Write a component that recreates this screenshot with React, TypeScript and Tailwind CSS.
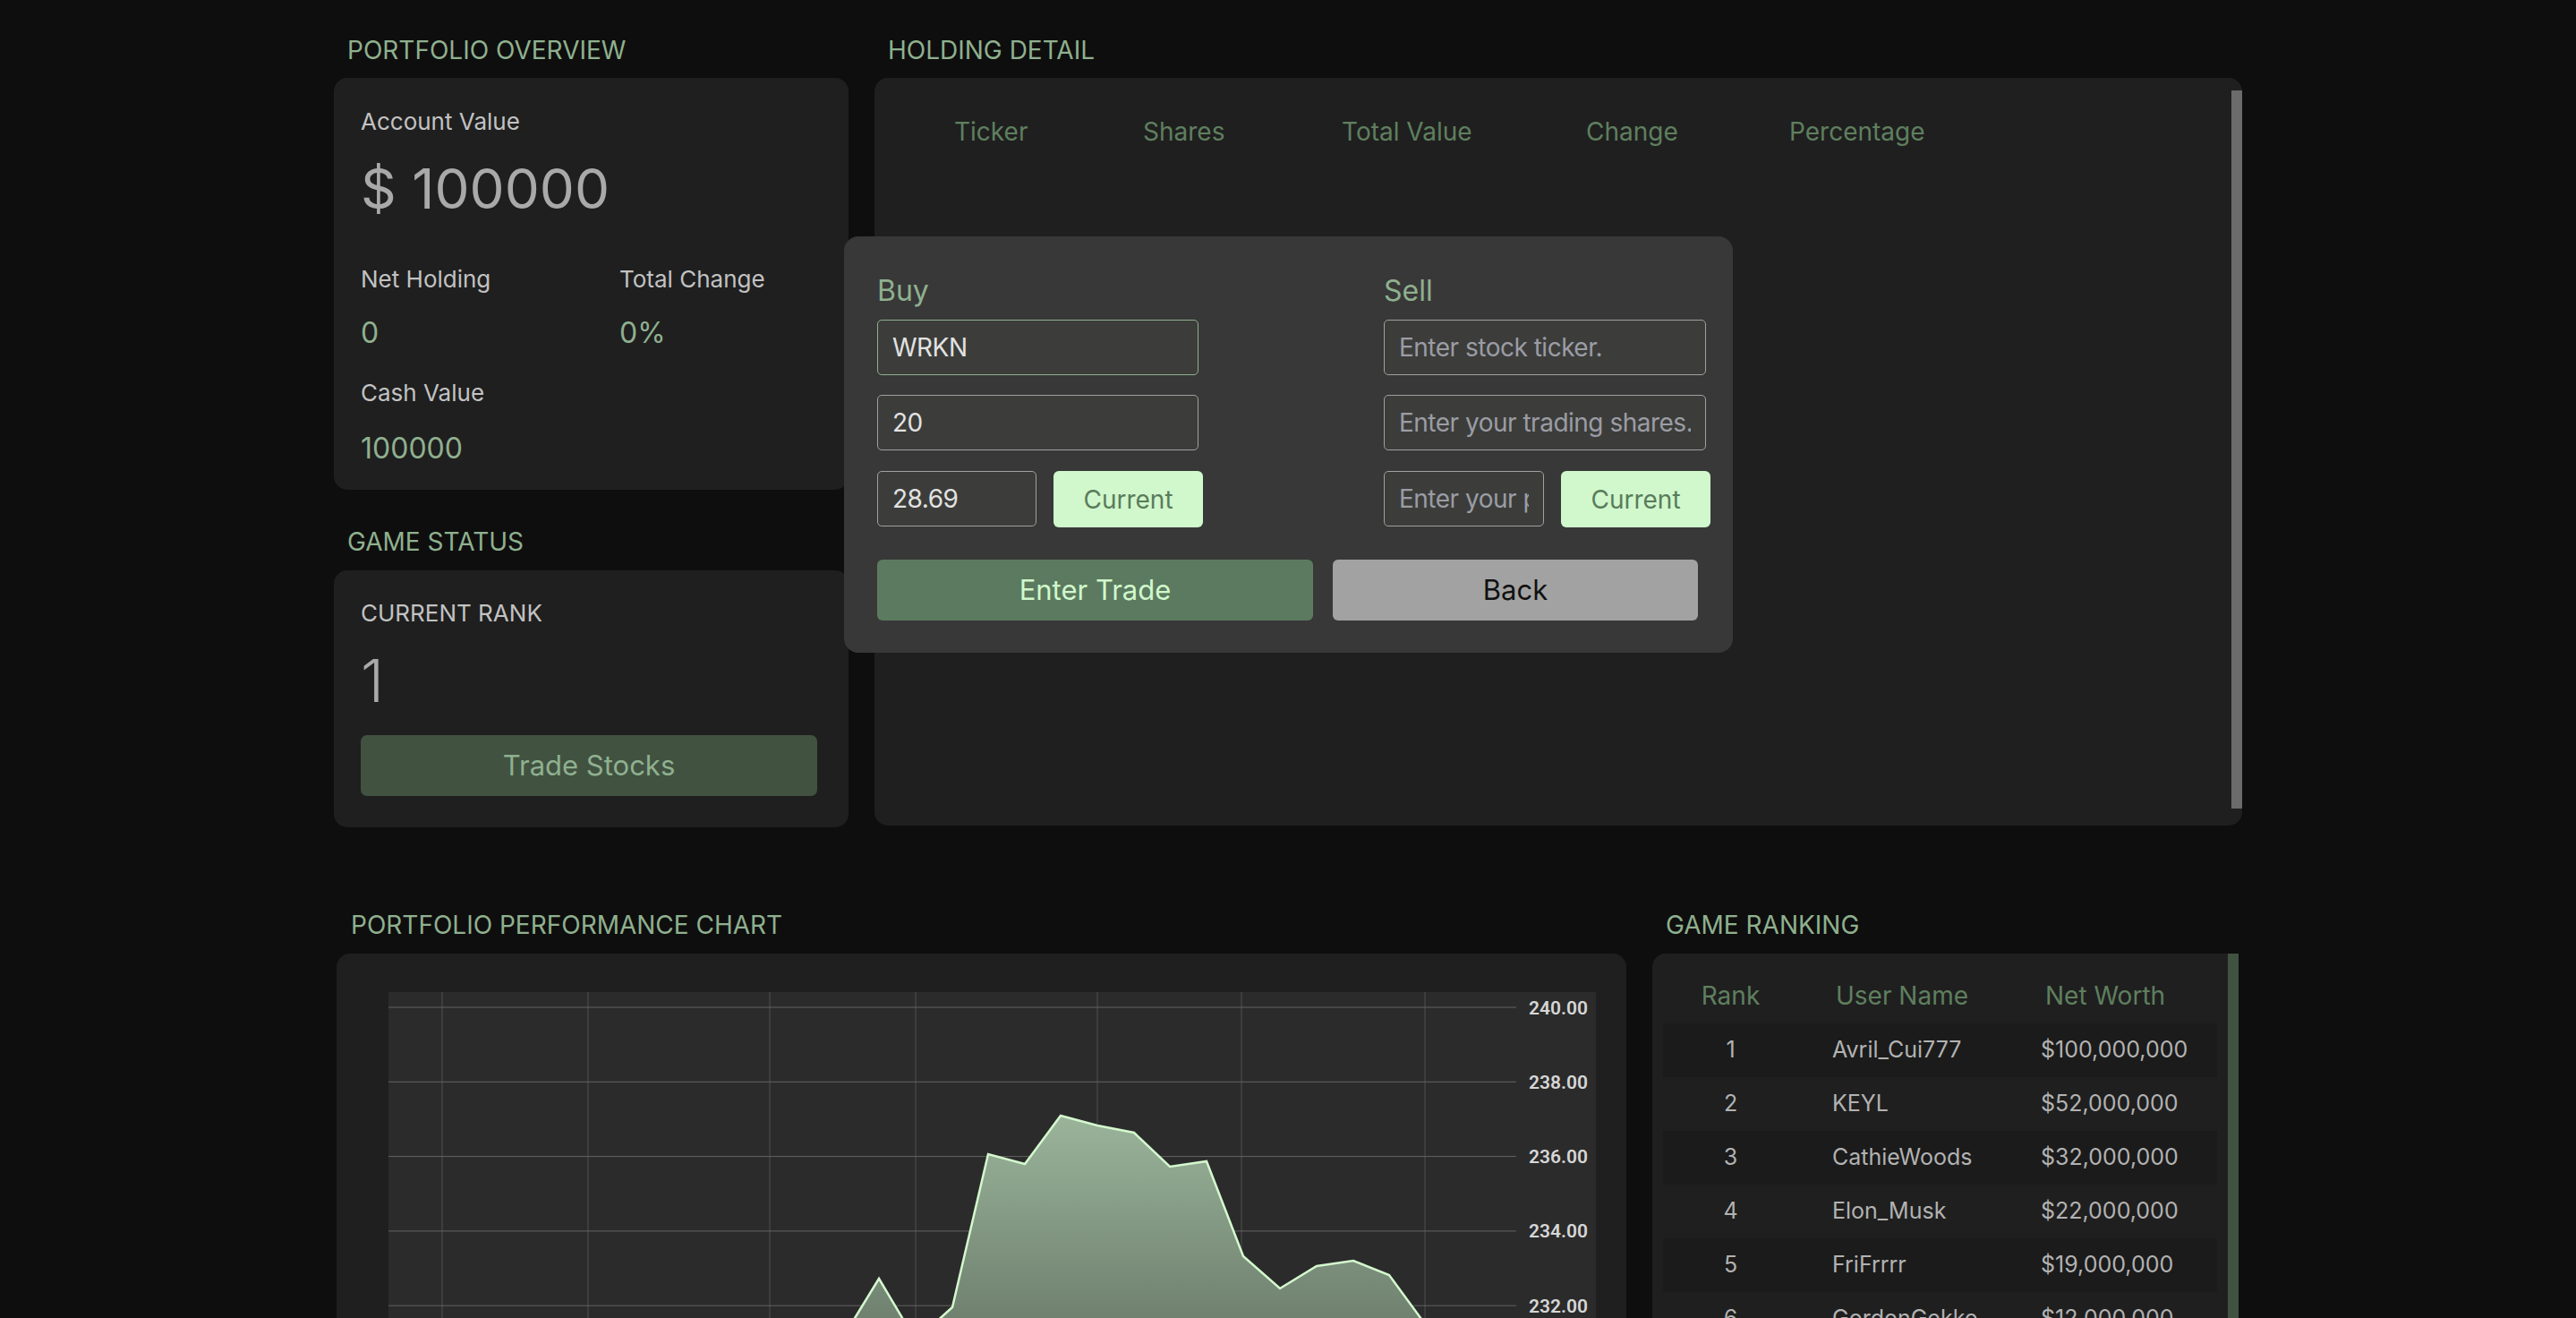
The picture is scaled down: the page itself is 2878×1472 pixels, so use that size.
import React from "react";

const TITLE = "text-[28px] leading-[28px] text-[#8fb08f] pl-[15px]";

function SectionTitle({ children, className = "" }: { children: React.ReactNode; className?: string }) {
  return <div className={`${TITLE} ${className}`}>{children}</div>;
}

const rankRows = [
  ["1", "Avril_Cui777", "$100,000,000"],
  ["2", "KEYL", "$52,000,000"],
  ["3", "CathieWoods", "$32,000,000"],
  ["4", "Elon_Musk", "$22,000,000"],
  ["5", "FriFrrrr", "$19,000,000"],
  ["6", "GordonGekko", "$12,000,000"],
  ["7", "BuffettFan", "$9,000,000"],
  ["8", "Moonshot", "$6,000,000"],
];

const pts: [number, number][] = [
  [60, 470], [101, 455], [142, 480], [183, 460], [224, 440], [265, 450], [306, 430],
  [347, 445], [388, 420], [429, 435], [470, 410], [507, 387], [548, 320], [589, 389],
  [630, 352], [670, 181], [711, 192], [751, 138], [792, 149], [833, 157], [873, 195],
  [914, 189], [955, 295], [996, 331], [1037, 306], [1078, 300], [1118, 316], [1159, 372],
  [1200, 410], [1241, 395], [1258, 402],
];

function Chart() {
  const W = 1349;
  const H = 540;
  const hLines = [0, 1, 2, 3, 4, 5, 6].map((k) => 17 + 83.3 * k);
  const labels = ["240.00", "238.00", "236.00", "234.00", "232.00", "230.00", "228.00"];
  const vLines = [60, 223, 426, 589, 792, 953, 1158];
  const line = pts.map((p) => p.join(",")).join(" ");
  const area = `${pts[0][0]},${H} ${line} ${pts[pts.length - 1][0]},${H}`;
  return (
    <svg width={W} height={H} className="block">
      <defs>
        <linearGradient id="fillg" gradientUnits="userSpaceOnUse" x1="0" y1="138" x2="0" y2="540">
          <stop offset="0" stopColor="#9ab49a" />
          <stop offset="1" stopColor="#4f594f" />
        </linearGradient>
      </defs>
      <rect x="0" y="0" width={W} height={H} fill="#2b2b2b" />
      {vLines.map((x) => (
        <line key={x} x1={x} y1={0} x2={x} y2={H} stroke="#515151" strokeWidth="1" />
      ))}
      {hLines.map((y) => (
        <line key={y} x1={0} y1={y} x2={1260} y2={y} stroke="#636363" strokeWidth="1" />
      ))}
      <polygon points={area} fill="url(#fillg)" />
      <polyline points={line} fill="none" stroke="#d4f8ce" strokeWidth="2.5" strokeLinejoin="miter" />
      {hLines.map((y, i) => (
        <text
          key={labels[i]}
          x={1274}
          y={y + 7.5}
          fill="#d6d6d6"
          fontSize="21"
          fontWeight="600"
          fontFamily="Roboto, 'Liberation Sans', sans-serif"
        >
          {labels[i]}
        </text>
      ))}
    </svg>
  );
}

const INPUT =
  "h-[62px] rounded-[5px] border bg-[#3c3d3a] px-[16px] text-[28px] tracking-[-0.5px] text-[#e2e2e2] placeholder:text-[#9b9ca5] outline-none";

export default function App() {
  return (
    <div className="relative min-h-screen bg-[#0e0e0e] font-['Inter','Liberation_Sans',sans-serif] pb-[60px]">
      <div className="w-[2132px] mx-auto pt-[42px]">
        {/* Top row */}
        <div className="flex items-start gap-[29px]">
          <div className="w-[575px] flex flex-col">
            <SectionTitle>PORTFOLIO OVERVIEW</SectionTitle>
            <div className="mt-[17px] h-[460px] rounded-[15px] bg-[#1f1f1f] px-[30px] pt-[33px]">
              <div className="text-[26px] leading-[32px] text-[#c2c2c2]">Account Value</div>
              <div className="mt-[28px] text-[62px] leading-[62px] text-[#a9a9a9]">$ 100000</div>
              <div className="mt-[54px] grid grid-cols-[289px_1fr]">
                <div>
                  <div className="text-[26px] leading-[32px] text-[#c2c2c2]">Net Holding</div>
                  <div className="mt-[24px] text-[32px] leading-[40px] text-[#8fb08f]">0</div>
                </div>
                <div>
                  <div className="text-[26px] leading-[32px] text-[#c2c2c2]">Total Change</div>
                  <div className="mt-[24px] text-[32px] leading-[40px] text-[#8fb08f]">0%</div>
                </div>
              </div>
              <div className="mt-[31px] text-[26px] leading-[32px] text-[#c2c2c2]">Cash Value</div>
              <div className="mt-[26px] text-[32px] leading-[40px] text-[#8fb08f]">100000</div>
            </div>

            <SectionTitle className="mt-[44px]">GAME STATUS</SectionTitle>
            <div className="mt-[18px] h-[287px] rounded-[15px] bg-[#1f1f1f] px-[30px] pt-[32px]">
              <div className="text-[26px] leading-[32px] text-[#c2c2c2]">CURRENT RANK</div>
              <div className="mt-[25px] text-[66px] leading-[68px] font-light text-[#a9a9a9]">1</div>
              <button className="mt-[27px] w-[510px] h-[68px] rounded-[7px] bg-[#415241] text-[31px] text-[#8fb08f] block">
                Trade Stocks
              </button>
            </div>
          </div>

          <div className="flex-1 flex flex-col">
            <SectionTitle>HOLDING DETAIL</SectionTitle>
            <div className="mt-[17px] h-[835px] rounded-[15px] bg-[#1f1f1f] flex">
              <div className="flex-1 pl-[89px] pt-[46px]">
                <div className="flex text-[28px] leading-[28px] text-[#5f7f5f]">
                  <div className="w-[211px]">Ticker</div>
                  <div className="w-[222px]">Shares</div>
                  <div className="w-[273px]">Total Value</div>
                  <div className="w-[227px]">Change</div>
                  <div>Percentage</div>
                </div>
              </div>
              <div className="w-[12px] pt-[14px] pb-[19px] flex">
                <div className="flex-1 bg-[#6b6b6b]" />
              </div>
            </div>
          </div>
        </div>

        {/* Bottom row */}
        <div className="mt-[95px] flex items-start gap-[29px] pl-[3px] pr-[4px]">
          <div className="w-[1441px] flex flex-col">
            <div className="text-[28px] leading-[28px] text-[#8fb08f] pl-[16px]">PORTFOLIO PERFORMANCE CHART</div>
            <div className="mt-[18px] rounded-[15px] bg-[#1f1f1f] pt-[43px] pl-[58px] pr-[34px] pb-[40px]">
              <Chart />
            </div>
          </div>
          <div className="w-[655px] flex flex-col">
            <div className="text-[28px] leading-[28px] text-[#8fb08f] pl-[15px]">GAME RANKING</div>
            <div className="mt-[18px] rounded-tl-[15px] rounded-bl-[15px] bg-[#1f1f1f] flex">
              <div className="flex-1 pt-[33px] px-[12px] pb-[20px]">
                <div className="flex text-[28px] leading-[28px] text-[#5f7f5f]">
                  <div className="w-[189px] pr-[38px] text-center">Rank</div>
                  <div className="w-[233px] pl-[4px]">User Name</div>
                  <div className="pl-[5px]">Net Worth</div>
                </div>
                <div className="mt-[17px] flex flex-col">
                  {rankRows.map((r, i) => (
                    <div
                      key={r[0]}
                      className={`flex items-center h-[60px] text-[25px] text-[#b2b2b2] ${i % 2 === 0 ? "bg-[#1b1b1b]" : "bg-[#1f1f1f]"}`}
                    >
                      <div className="w-[189px] pr-[38px] text-center">{r[0]}</div>
                      <div className="w-[233px]">{r[1]}</div>
                      <div>{r[2]}</div>
                    </div>
                  ))}
                </div>
              </div>
              <div className="w-[12px] bg-[#415241]" />
            </div>
          </div>
        </div>
      </div>

      {/* Trade modal */}
      <div className="absolute left-[943px] top-[264px] w-[993px] h-[465px] rounded-[16px] bg-[#383838] pt-[45px] pl-[37px]">
        <div className="flex gap-[202px]">
          <div className="w-[364px] flex flex-col">
            <div className="text-[32px] leading-[32px] text-[#8fb08f]">Buy</div>
            <input defaultValue="WRKN" className={`mt-[16px] w-[359px] border-[#8fb08f] ${INPUT}`} />
            <input defaultValue="20" className={`mt-[22px] w-[359px] border-[#a0a0a0] ${INPUT}`} />
            <div className="mt-[23px] flex gap-[19px]">
              <input defaultValue="28.69" className={`w-[178px] border-[#a0a0a0] ${INPUT}`} />
              <button className="w-[167px] h-[63px] rounded-[6px] bg-[#d0f8cc] text-[28px] text-[#5b7b5b]">Current</button>
            </div>
          </div>
          <div className="w-[365px] flex flex-col">
            <div className="text-[32px] leading-[32px] text-[#8fb08f]">Sell</div>
            <input placeholder="Enter stock ticker." className={`mt-[16px] w-[360px] border-[#a0a0a0] ${INPUT}`} />
            <input placeholder="Enter your trading shares." className={`mt-[22px] w-[360px] border-[#a0a0a0] ${INPUT}`} />
            <div className="mt-[23px] flex gap-[19px]">
              <input placeholder="Enter your price." className={`w-[179px] border-[#a0a0a0] ${INPUT}`} />
              <button className="w-[167px] h-[63px] rounded-[6px] bg-[#d0f8cc] text-[28px] text-[#5b7b5b]">Current</button>
            </div>
          </div>
        </div>
        <div className="mt-[36px] flex gap-[22px]">
          <button className="w-[487px] h-[68px] rounded-[6px] bg-[#5c7a5f] text-[31px] text-[#d0f8cc]">Enter Trade</button>
          <button className="w-[408px] h-[68px] rounded-[6px] bg-[#a2a2a2] text-[31px] text-[#111111]">Back</button>
        </div>
      </div>
    </div>
  );
}
